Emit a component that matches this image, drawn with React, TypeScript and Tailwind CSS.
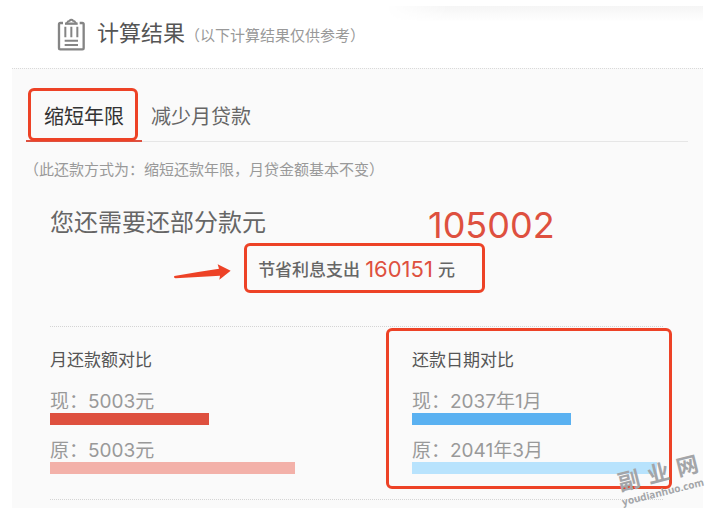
import React, { useState } from 'react';
import { clsx } from 'clsx';

interface CompareRow {
  label: string;
  value: string;
  percent: number;
  color: string;
}

interface CompareColumnProps {
  title: string;
  rows: CompareRow[];
  highlighted?: boolean;
}

const tabs = ['缩短年限', '减少月贷款'];

const paymentRows: CompareRow[] = [
  { label: '现：', value: '5003元', percent: 65, color: 'bg-[#de503f]' },
  { label: '原：', value: '5003元', percent: 100, color: 'bg-[#f3b1a9]' },
];

const dateRows: CompareRow[] = [
  { label: '现：', value: '2037年1月', percent: 65, color: 'bg-[#5ab1f1]' },
  { label: '原：', value: '2041年3月', percent: 100, color: 'bg-[#b8e3fd]' },
];

const ClipboardIcon: React.FC = () => (
  <svg viewBox="0 0 84 99" className="h-[33px] w-[28px]" fill="none" stroke="#858585" strokeWidth="7" aria-hidden="true">
    <path d="M18 15H10Q6 15 6 19V90Q6 94 10 94H76Q80 94 80 90V19Q80 15 76 15H68" />
    <path d="M24 17H62" />
    <path d="M29 16Q33 8 38 8Q40 5 43 5Q46 5 48 8Q53 8 57 16" strokeWidth="6" />
    <path d="M25 26V58M43 26V58M61 26V58" strokeWidth="6" />
    <path d="M23 68H63M23 81H63" strokeWidth="6" />
  </svg>
);

const ArrowMark: React.FC<{ className?: string }> = ({ className }) => (
  <svg viewBox="520 248 180 54" className={className} fill="#ed4226" aria-hidden="true">
    <path d="M524 287Q590 275 658 265L654 252L693 271L659 298L661 286L528 294Q521 292 524 287Z" />
  </svg>
);

const HighlightBox: React.FC<{ className: string }> = ({ className }) => (
  <span
    aria-hidden="true"
    className={clsx('pointer-events-none absolute rounded-md border-[3px] border-[#ed4226]', className)}
  />
);

const CompareColumn: React.FC<CompareColumnProps> = ({ title, rows, highlighted }) => (
  <section className="relative pt-[22px] pb-[25px]">
    <h3 className="text-[17px] leading-6 text-[#555]">{title}</h3>
    <div className="mt-[18px] flex max-w-[245px] flex-col gap-[15px]">
      {rows.map((row) => (
        <div key={row.label}>
          <p className="font-[Inter,'Noto_Sans_CJK_SC',sans-serif] text-[19px] leading-[22px] text-[#999]">
            {row.label}
            {row.value}
          </p>
          <div className={clsx('h-3', row.color)} style={{ width: `${row.percent}%` }} />
        </div>
      ))}
    </div>
    {highlighted && <HighlightBox className="top-px -right-[9px] bottom-[10px] -left-[26px]" />}
  </section>
);

const Watermark: React.FC = () => (
  <div
    aria-hidden="true"
    className="pointer-events-none absolute right-1 bottom-2.5 flex -rotate-[14deg] flex-col items-center font-bold text-[#a3a5a8]"
  >
    <div className="flex gap-2 text-[22px] leading-6">
      <span>副</span>
      <span>业</span>
      <span>网</span>
    </div>
    <div className="font-['Open_Sans',sans-serif] text-[10px] leading-3">youdianhuo.com</div>
  </div>
);

export default function App() {
  const [activeTab, setActiveTab] = useState(0);

  return (
    <main className="relative overflow-hidden bg-white pr-[3px] pl-3 font-['Liberation_Sans','Noto_Sans_CJK_SC',sans-serif]">
      {/* Header */}
      <header className="relative flex h-[68px] items-center pl-[45px]">
        <div className="absolute top-1.5 right-0 h-4 w-[46%] bg-linear-to-b from-[#f5f5f5] to-white mask-l-from-80%" />
        <ClipboardIcon />
        <h1 className="ml-3 text-[22px] leading-8 text-[#555]">计算结果</h1>
        <span className="pt-1 text-[15px] leading-6 text-[#999]">（以下计算结果仅供参考）</span>
      </header>

      <div className="border-t border-dotted border-[#d9d9d9] bg-[#fafafa] pt-4 pb-2">
        {/* Tabs */}
        <div role="tablist" className="mr-[15px] ml-[14px] flex border-b border-[#e6e6e6]">
          {tabs.map((tab, index) => (
            <button
              key={tab}
              type="button"
              role="tab"
              aria-selected={index === activeTab}
              onClick={() => setActiveTab(index)}
              className={clsx(
                'relative -mb-px h-[57px] border-b-2 pt-2 text-xl leading-6',
                index === activeTab ? 'border-[#de503f] px-[18px] text-[#333]' : 'border-transparent px-[9px] text-[#666]'
              )}
            >
              {tab}
              {index === activeTab && <HighlightBox className="top-[3px] right-1 -bottom-px left-0.5" />}
            </button>
          ))}
        </div>

        <p className="mt-4 ml-3 text-[15px] leading-6 text-[#999]">
          （此还款方式为：缩短还款年限，月贷金额基本不变）
        </p>

        <div className="mr-10 ml-[38px]">
          {/* Summary */}
          <div className="mt-[21px] grid grid-cols-[1fr_251px] items-center">
            <h2 className="text-2xl leading-10 text-[#666]">您还需要还部分款元</h2>
            <strong className="pt-1 pl-4 font-[Inter,sans-serif] text-4xl leading-9 font-normal text-[#de503f]">105002</strong>
          </div>
          <div className="flex justify-center">
            <p className="relative flex h-[50px] items-center gap-[5px] pt-1.5 text-[17px] leading-6 font-medium text-[#666]">
              <ArrowMark className="absolute top-5 right-full mr-[25px] h-[18px] w-[60px]" />
              <span>节省利息支出</span>
              <span className="pb-1 font-[Inter,sans-serif] text-[22px] font-normal text-[#de503f]">160151</span>
              <span>元</span>
              <HighlightBox className="inset-y-0 -right-[30px] -left-[14px]" />
            </p>
          </div>

          {/* Comparison */}
          <div className="mt-[33px] grid grid-cols-[1fr_251px] border-y border-dotted border-[#d4d4d4]">
            <CompareColumn title="月还款额对比" rows={paymentRows} />
            <CompareColumn title="还款日期对比" rows={dateRows} highlighted />
          </div>
        </div>
      </div>

      <Watermark />
    </main>
  );
}
